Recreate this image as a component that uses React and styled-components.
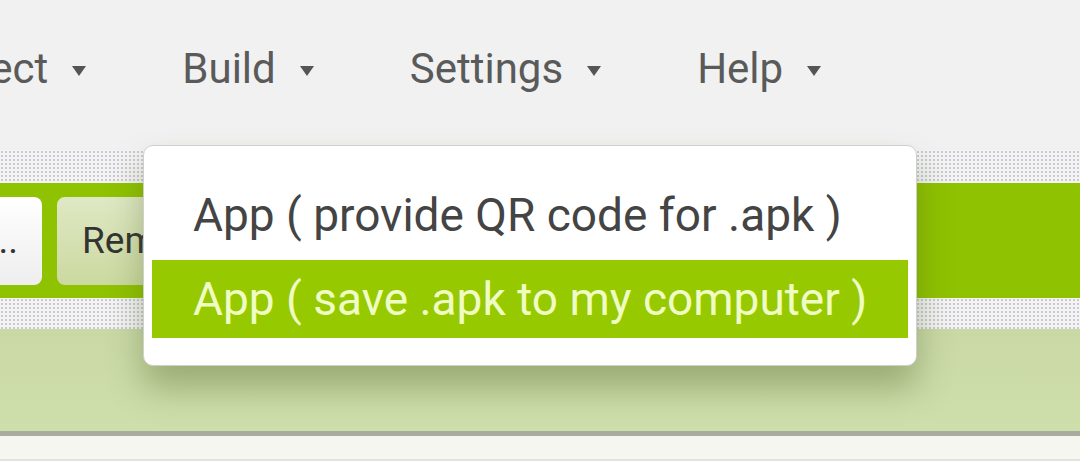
import React from "react"
import styled, { createGlobalStyle } from "styled-components"

const GlobalStyle = createGlobalStyle`
html, body {
  margin: 0;
  padding: 0;
  overflow: hidden;
  background: #ffffff;
}
#root {
  width: 1080px;
  height: 466px;
}
`

const dots = `
background-color: #f4f4f4;
background-image: radial-gradient(circle, #c9c9cf 0.9px, transparent 1.3px);
background-size: 4px 4px;
`

const Page = styled.div`
position: relative;
width: 1080px;
height: 466px;
overflow: hidden;
display: flex;
flex-direction: column;
font-family: Roboto, "Liberation Sans", sans-serif;
`

const TopBar = styled.div`
height: 150px;
flex-shrink: 0;
background: #f1f1f1;
display: flex;
align-items: center;
padding-bottom: 13px;
box-sizing: border-box;
`

const MenuRow = styled.div`
display: flex;
align-items: center;
gap: 96px;
margin-left: -84px;
`

const MenuItem = styled.div`
display: flex;
align-items: center;
gap: 24px;
font-size: 42px;
color: #5a5a5a;
`

const Caret = styled.span`
width: 0;
height: 0;
margin-top: 4px;
border-left: 7px solid transparent;
border-right: 7px solid transparent;
border-top: 10px solid #555555;
`

const DottedBand = styled.div`
height: ${p => p.$h}px;
flex-shrink: 0;
${dots}
`

const Toolbar = styled.div`
height: 115px;
flex-shrink: 0;
background: #8fc200;
display: flex;
align-items: center;
gap: 15px;
`

const ToolButton = styled.div`
height: 88px;
border-radius: 8px;
display: flex;
align-items: center;
font-size: 37px;
color: #333333;
white-space: nowrap;
overflow: hidden;
flex-shrink: 0;
box-sizing: border-box;
background: ${p => p.$light ? "linear-gradient(#ffffff, #eeeeee)" : "linear-gradient(#dfe8c4, #cbd9a0)"};
width: ${p => p.$w}px;
justify-content: ${p => p.$end ? "flex-end" : "flex-start"};
padding: 0 ${p => p.$pr || 0}px 0 ${p => p.$pl || 0}px;
margin-left: ${p => p.$ml || 0}px;
`

const Workspace = styled.div`
height: 102px;
flex-shrink: 0;
background: linear-gradient(#c9d8a5, #cfdfab);
border-bottom: 5px solid #a9ab9f;
`

const Footer = styled.div`
height: 23px;
flex-shrink: 0;
background: #f6f6f1;
border-bottom: 2px solid #e3e3dd;
`

const Dropdown = styled.div`
position: absolute;
left: 143px;
top: 145px;
width: 774px;
height: 221px;
box-sizing: border-box;
background: #ffffff;
border: 1px solid #cfcfcf;
border-radius: 10px;
box-shadow: 0 22px 34px rgba(70, 90, 30, 0.36);
padding: 30px 8px 0 8px;
display: flex;
flex-direction: column;
gap: 6px;
`

const DropItem = styled.div`
height: 78px;
flex-shrink: 0;
display: flex;
align-items: center;
padding-left: 41px;
font-size: 46px;
white-space: nowrap;
color: ${p => p.$active ? "#effcc4" : "#444444"};
background: ${p => p.$active ? "#97c900" : "transparent"};
`

const menus = ["Project", "Build", "Settings", "Help"]

export default function App() {
  return (
    <>
      <GlobalStyle />
      <Page>
        <TopBar>
          <MenuRow>
            {menus.map(m => (
              <MenuItem key={m}>
                {m}
                <Caret />
              </MenuItem>
            ))}
          </MenuRow>
        </TopBar>
        <DottedBand $h={33} />
        <Toolbar>
          <ToolButton $light $end $w={260} $ml={-218} $pr={24}>Add Screen ...</ToolButton>
          <ToolButton $w={200} $pl={25}>Remove Screen</ToolButton>
        </Toolbar>
        <DottedBand $h={31} />
        <Workspace />
        <Footer />
        <Dropdown>
          <DropItem>App ( provide QR code for .apk )</DropItem>
          <DropItem $active>App ( save .apk to my computer )</DropItem>
        </Dropdown>
      </Page>
    </>
  )
}
